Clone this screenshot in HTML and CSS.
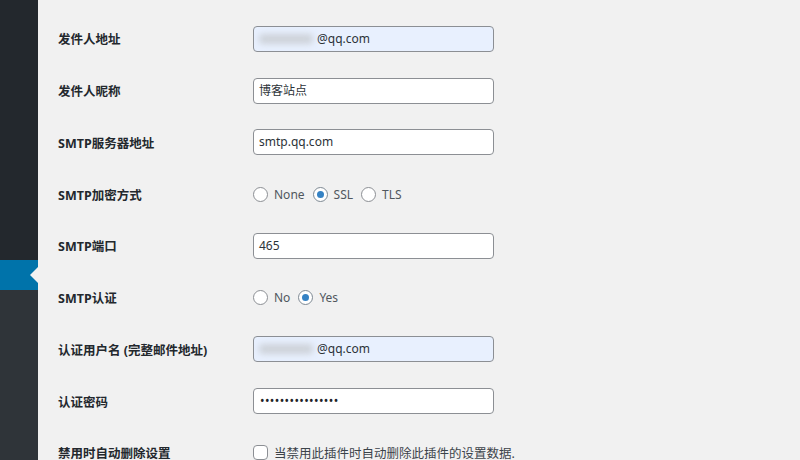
FILE: index.html
```html
<!DOCTYPE html>
<html lang="zh-CN">
<head>
<meta charset="utf-8">
<link rel="stylesheet" href="styles.css">
</head>
<body>
<div class="page">
  <aside class="sidebar">
    <div class="menu-top"></div>
    <div class="menu-active"><span class="arrow"></span></div>
    <div class="menu-rest"></div>
  </aside>
  <main class="content">
    <div class="form">
      <div class="row">
        <div class="label">发件人地址</div>
        <div class="field"><div class="input autofill"><span class="blur"></span>@qq.com</div></div>
      </div>
      <div class="row">
        <div class="label">发件人昵称</div>
        <div class="field"><div class="input">博客站点</div></div>
      </div>
      <div class="row">
        <div class="label">SMTP服务器地址</div>
        <div class="field"><div class="input">smtp.qq.com</div></div>
      </div>
      <div class="row">
        <div class="label">SMTP加密方式</div>
        <div class="field radios">
          <span class="opt"><span class="radio"></span>None</span>
          <span class="opt"><span class="radio checked"></span>SSL</span>
          <span class="opt"><span class="radio"></span>TLS</span>
        </div>
      </div>
      <div class="row">
        <div class="label">SMTP端口</div>
        <div class="field"><div class="input">465</div></div>
      </div>
      <div class="row">
        <div class="label">SMTP认证</div>
        <div class="field radios">
          <span class="opt"><span class="radio"></span>No</span>
          <span class="opt"><span class="radio checked"></span>Yes</span>
        </div>
      </div>
      <div class="row">
        <div class="label">认证用户名 (完整邮件地址)</div>
        <div class="field"><div class="input autofill"><span class="blur"></span>@qq.com</div></div>
      </div>
      <div class="row">
        <div class="label">认证密码</div>
        <div class="field"><div class="input password">••••••••••••••••</div></div>
      </div>
      <div class="row">
        <div class="label">禁用时自动删除设置</div>
        <div class="field radios">
          <span class="opt"><span class="checkbox"></span><span class="desc">当禁用此插件时自动删除此插件的设置数据.</span></span>
        </div>
      </div>
    </div>
  </main>
</div>
</body>
</html>
```
FILE: styles.css
```css
* { box-sizing: border-box; }
html, body { margin: 0; padding: 0; }
body {
  width: 800px;
  height: 460px;
  overflow: hidden;
  background: #f1f1f1;
  font-family: "Noto Sans", "Noto Sans CJK SC", sans-serif;
  color: #1d2327;
}
.page {
  display: flex;
  height: 460px;
}
.sidebar {
  width: 38px;
  flex: none;
  display: flex;
  flex-direction: column;
}
.menu-top { height: 260px; background: #23282d; }
.menu-active {
  height: 30px;
  background: #0073aa;
  position: relative;
}
.arrow {
  position: absolute;
  right: 0;
  top: 7px;
  width: 0;
  height: 0;
  border-top: 8px solid transparent;
  border-bottom: 8px solid transparent;
  border-right: 8px solid #f1f1f1;
}
.menu-rest { flex: 1; background: #2f3439; }
.content {
  flex: 1;
  padding: 13px 0 0 20px;
}
.row {
  display: flex;
  align-items: center;
  height: 51.75px;
}
.label {
  width: 195px;
  flex: none;
  font-size: 12.5px;
  font-weight: 700;
  color: #23282d;
}
.field { flex: 1; }
.input {
  width: 241px;
  height: 26px;
  border: 1px solid #8c8f94;
  border-radius: 4px;
  background: #fff;
  padding: 0 5px;
  font-size: 12px;
  line-height: 24px;
  color: #2c3338;
  display: flex;
  align-items: center;
}
.input.autofill { background: #e8f0fe; }
.blur {
  display: inline-block;
  width: 54px;
  height: 10px;
  background: #cdd2d9;
  border-radius: 4px;
  filter: blur(3px);
  margin-right: 4px;
}
.password {
  font-size: 12px;
  letter-spacing: 0.4px;
  color: #1d2327;
  padding-left: 6px;
}
.radios {
  display: flex;
  align-items: center;
  gap: 8px;
  font-size: 12px;
  color: #50575e;
}
.opt {
  display: inline-flex;
  align-items: center;
  gap: 6px;
}
.radio {
  width: 15px;
  height: 15px;
  border: 1px solid #8c8f94;
  border-radius: 50%;
  background: #fff;
  display: inline-flex;
  align-items: center;
  justify-content: center;
}
.radio.checked { border-color: #7e8993; }
.radio.checked::after {
  content: "";
  width: 7px;
  height: 7px;
  border-radius: 50%;
  background: #3582c4;
}
.checkbox {
  width: 15px;
  height: 15px;
  border: 1px solid #8c8f94;
  border-radius: 4px;
  background: #fff;
}
.desc {
  color: #3c434a;
  font-size: 12.5px;
}
```
